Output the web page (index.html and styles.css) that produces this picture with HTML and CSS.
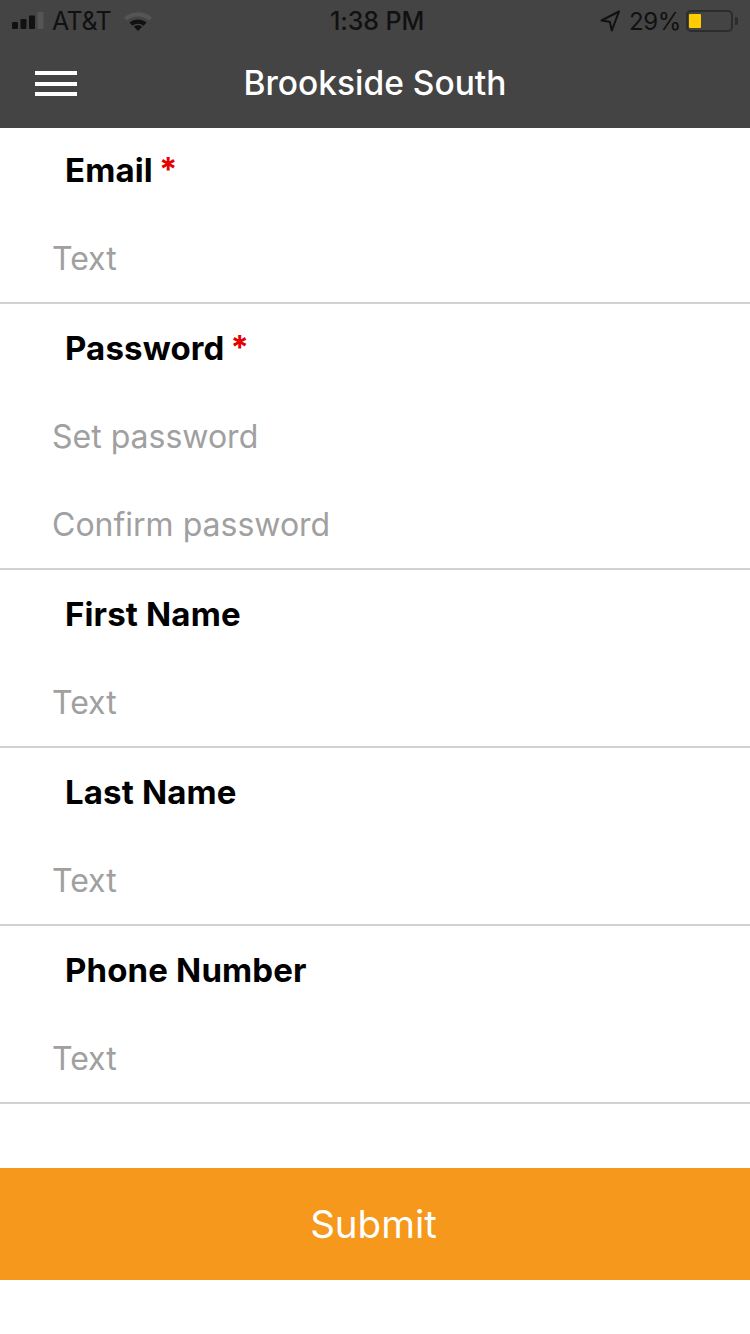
FILE: index.html
```html
<!DOCTYPE html>
<html lang="en">
<head>
<meta charset="utf-8">
<title>Brookside South</title>
<link rel="stylesheet" href="styles.css">
</head>
<body>
<header class="top">
  <div class="status">
    <div class="status-left">
      <svg class="signal" width="34" height="20" viewBox="0 0 34 20"><rect x="0" y="11" width="6" height="7" rx="1.2" fill="#111"/><rect x="8.5" y="8" width="6" height="10" rx="1.2" fill="#111"/><rect x="17" y="4.5" width="6" height="13.5" rx="1.2" fill="#111"/><rect x="25.5" y="1" width="6" height="17" rx="1.2" fill="#555"/></svg>
      <span class="carrier">AT&amp;T</span>
      <svg class="wifi" width="30" height="22" viewBox="0 0 30 22"><path d="M1 7.500C9 .5 21 .5 29 7.500L26.200 10.600C19.800 5 10.200 5 3.800 10.600Z" fill="#555"/><path d="M6.500 12.600C11.400 8.300 18.600 8.300 23.500 12.600L20.600 15.700C17.300 13 12.700 13 9.400 15.700Z" fill="#111"/><path d="M10.800 16.600C13.300 14.700 16.700 14.700 19.200 16.600L15 21Z" fill="#111"/></svg>
    </div>
    <div class="clock">1:38 PM</div>
    <div class="status-right">
      <svg class="arrow" width="20" height="22" viewBox="0 0 20 22"><path d="M19 1.500 1.500 10.500 9.800 11.800 11.800 20.500Z" fill="none" stroke="#111" stroke-width="2" stroke-linejoin="round"/></svg>
      <span class="pct">29%</span>
      <div class="battery"><div class="level"></div></div>
      <div class="nub"></div>
    </div>
  </div>
  <div class="bar">
    <div class="burger"><i></i><i></i><i></i></div>
    <h1>Brookside South</h1>
  </div>
</header>
<main>
  <section class="group first">
    <div class="label">Email <b>*</b></div>
    <div class="field">Text</div>
  </section>
  <section class="group">
    <div class="label">Password <b>*</b></div>
    <div class="field">Set password</div>
    <div class="field">Confirm password</div>
  </section>
  <section class="group">
    <div class="label">First Name</div>
    <div class="field">Text</div>
  </section>
  <section class="group">
    <div class="label">Last Name</div>
    <div class="field">Text</div>
  </section>
  <section class="group">
    <div class="label">Phone Number</div>
    <div class="field">Text</div>
  </section>
  <button class="submit" type="button">Submit</button>
</main>
</body>
</html>
```
FILE: styles.css
```css
* { box-sizing: border-box; }
html, body { margin: 0; padding: 0; }
body { width: 750px; height: 1334px; background: #fff; font-family: Inter, "Liberation Sans", sans-serif; overflow: hidden; }
.top { height: 128px; background: #444; }
.status { height: 40px; display: flex; align-items: center; justify-content: space-between; padding: 2px 12px 0 12px; color: #111; font-size: 25px; position: relative; }
.status-left, .status-right { display: flex; align-items: center; }
.carrier { margin-left: 6px; letter-spacing: -0.5px; }
.wifi { margin-left: 12px; }
.clock { position: absolute; left: 4px; right: 0; text-align: center; font-weight: 500; font-size: 25px; letter-spacing: -0.1px; }
.arrow { margin-right: 9px; }
.pct { margin-right: 5px; font-size: 24px; letter-spacing: -0.4px; }
.battery { width: 47px; height: 22px; border: 2px solid #2c2c2c; border-radius: 5px; padding: 2px 1px; }
.level { width: 12px; height: 14px; background: #fc0; border-radius: 1px; }
.nub { width: 3px; height: 8px; background: #2c2c2c; margin-left: 2px; border-radius: 0 2px 2px 0; }
.bar { height: 88px; display: flex; align-items: center; justify-content: center; position: relative; padding-bottom: 2px; }
.bar h1 { margin: 0; font-size: 33.5px; font-weight: 500; color: #fff; }
.burger { position: absolute; left: 35px; top: 31px; width: 42px; height: 25px; display: flex; flex-direction: column; justify-content: space-between; }
.burger i { display: block; height: 4px; background: #fff; }
.group { border-bottom: 2px solid #d2d2d2; }
.label { height: 88px; display: flex; align-items: center; gap: 6px; padding-left: 65px; font-size: 33px; font-weight: 700; color: #000; letter-spacing: 0.15px; }
.first .label { height: 86px; padding-bottom: 2px; }
.label b { color: #e60000; font-weight: 700; position: relative; top: -1px; }
.field { height: 88px; display: flex; align-items: center; padding-left: 52px; font-size: 32px; color: #a0a0a0; }
.submit { display: block; width: 100%; height: 112px; margin-top: 64px; border: 0; background: #f5981c; color: #fff; font-family: inherit; font-size: 38.5px; font-weight: 400; padding: 0 3px 0 0; }
```
